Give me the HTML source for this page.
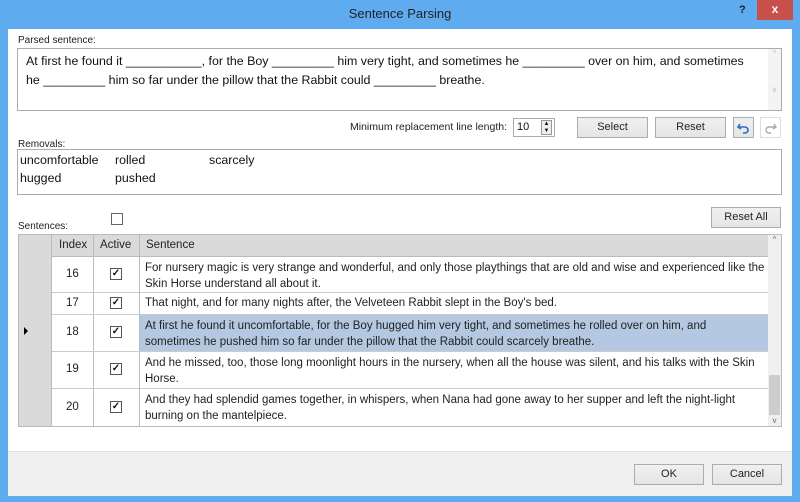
<!DOCTYPE html>
<html><head><style>
*{box-sizing:border-box;margin:0;padding:0}
body{width:800px;height:502px;background:#5eabf0;font-family:"Liberation Sans",sans-serif;position:relative;overflow:hidden;color:#111}
.a{position:absolute}
.win{left:8px;top:29px;width:784px;height:467px;background:#fff}
.lbl{font-size:10px;color:#222}
.box{border:1px solid #ababab;background:#fff}
.btn{border:1px solid #acacac;background:linear-gradient(#f0f0f0,#e5e5e5);font-size:11px;text-align:center;color:#222}
.t13{font-size:12.4px;color:#111}
.g{font-size:11.5px;color:#222;white-space:nowrap}
.cb{width:12px;height:12px;border:1px solid #555;background:#fff;font-size:10px;line-height:10px;text-align:center;font-weight:bold}
</style></head><body>
<div class="a" style="left:0;top:0;width:800px;height:29px;text-align:center;font-size:13px;line-height:27px;color:#222">Sentence Parsing</div>
<div class="a" style="left:739px;top:4px;font-size:11px;font-weight:bold;color:#222">?</div>
<div class="a" style="left:757px;top:0;width:36px;height:20px;background:#c7504a;color:#fff;text-align:center;font-size:12px;line-height:19px;font-weight:bold">x</div>
<div class="a win"></div>
<div class="a lbl" style="left:18px;top:35px">Parsed sentence:</div>
<div class="a box" style="left:17px;top:48px;width:765px;height:63px"></div>
<div class="a" style="left:768px;top:49px;width:13px;height:61px;background:#f4f4f4;color:#bbb;font-size:8px;text-align:center">^<br><br><br><br>v</div>
<div class="a t13" style="left:26px;top:52px;line-height:19px;white-space:nowrap">At first he found it ___________, for the Boy _________ him very tight, and sometimes he _________ over on him, and sometimes<br>he _________ him so far under the pillow that the Rabbit could _________ breathe.</div>
<div class="a g" style="left:300px;top:121px;width:207px;text-align:right;font-size:10.5px">Minimum replacement line length:</div>
<div class="a box" style="left:513px;top:118px;width:42px;height:19px;font-size:11px;padding:2px 3px">10</div>
<div class="a" style="left:541px;top:120px;width:11px;height:15px;border:1px solid #999;background:#eee;font-size:6px;line-height:7px;text-align:center">▲<br>▼</div>
<div class="a btn" style="left:577px;top:117px;width:71px;height:21px;line-height:19px">Select</div>
<div class="a btn" style="left:655px;top:117px;width:71px;height:21px;line-height:19px">Reset</div>
<div class="a btn" style="left:733px;top:117px;width:21px;height:21px"><svg width="19" height="19"><path d="M6 6 L4 9 L7 11 M4 9 H11 A3 3 0 0 1 11 15 H9" fill="none" stroke="#2a6cc4" stroke-width="1.6"/></svg></div>
<div class="a" style="left:760px;top:117px;width:21px;height:21px;border:1px solid #ddd"><svg width="19" height="19"><path d="M13 6 L15 9 L12 11 M15 9 H8 A3 3 0 0 0 8 15 H10" fill="none" stroke="#aaa" stroke-width="1.4"/></svg></div>
<div class="a lbl" style="left:18px;top:139px">Removals:</div>
<div class="a box" style="left:17px;top:149px;width:765px;height:46px"></div>
<div class="a t13" style="left:20px;top:153px">uncomfortable</div>
<div class="a t13" style="left:20px;top:171px">hugged</div>
<div class="a t13" style="left:115px;top:153px">rolled</div>
<div class="a t13" style="left:115px;top:171px">pushed</div>
<div class="a t13" style="left:209px;top:153px">scarcely</div>
<div class="a lbl" style="left:18px;top:221px">Sentences:</div>
<div class="a" style="left:111px;top:213px;width:12px;height:12px;border:1px solid #666;background:#fff"></div>
<div class="a btn" style="left:711px;top:207px;width:70px;height:21px;line-height:19px">Reset All</div>
<div class="a" style="left:18px;top:234px;width:764px;height:193px;border:1px solid #bbb;background:#fff"></div>
<div class="a" style="left:19px;top:235px;width:749px;height:21px;background:#dadada"></div>
<div class="a" style="left:19px;top:235px;width:33px;height:191px;background:#dadada;border-right:1px solid #bbb"></div>
<div class="a" style="left:768px;top:235px;width:13px;height:191px;background:#f0f0f0;color:#666;font-size:8px;text-align:center">^</div>
<div class="a" style="left:769px;top:375px;width:11px;height:40px;background:#cdcdcd"></div>
<div class="a" style="left:768px;top:416px;width:13px;font-size:8px;color:#666;text-align:center">v</div>
<div class="a g" style="left:59px;top:239px">Index</div>
<div class="a g" style="left:100px;top:239px">Active</div>
<div class="a g" style="left:146px;top:239px">Sentence</div>
<div class="a" style="left:139px;top:314px;width:629px;height:37px;background:#b4c8e2"></div>
<div class="a" style="left:51px;top:235px;width:1px;height:191px;background:#bbb"></div>
<div class="a" style="left:93px;top:235px;width:1px;height:191px;background:#bbb"></div>
<div class="a" style="left:139px;top:235px;width:1px;height:191px;background:#bbb"></div>
<div class="a" style="left:52px;top:256px;width:716px;height:1px;background:#bbb"></div>
<div class="a" style="left:52px;top:292px;width:716px;height:1px;background:#ccc"></div>
<div class="a" style="left:52px;top:314px;width:716px;height:1px;background:#ccc"></div>
<div class="a" style="left:52px;top:351px;width:716px;height:1px;background:#ccc"></div>
<div class="a" style="left:52px;top:388px;width:716px;height:1px;background:#ccc"></div>
<div class="a" style="left:24px;top:327px;width:0;height:0;border-left:4px solid #000;border-top:4px solid transparent;border-bottom:4px solid transparent"></div>
<div class="a g" style="left:66px;top:268px">16</div>
<div class="a g" style="left:66px;top:297px">17</div>
<div class="a g" style="left:66px;top:326px">18</div>
<div class="a g" style="left:66px;top:363px">19</div>
<div class="a g" style="left:66px;top:401px">20</div>
<div class="a cb" style="left:110px;top:268px">✓</div>
<div class="a cb" style="left:110px;top:297px">✓</div>
<div class="a cb" style="left:110px;top:326px">✓</div>
<div class="a cb" style="left:110px;top:363px">✓</div>
<div class="a cb" style="left:110px;top:401px">✓</div>
<div class="a g" style="left:145px;top:260px;line-height:16px">For nursery magic is very strange and wonderful, and only those playthings that are old and wise and experienced like the<br>Skin Horse understand all about it.</div>
<div class="a g" style="left:145px;top:297px">That night, and for many nights after, the Velveteen Rabbit slept in the Boy's bed.</div>
<div class="a g" style="left:145px;top:318px;line-height:16px">At first he found it uncomfortable, for the Boy hugged him very tight, and sometimes he rolled over on him, and<br>sometimes he pushed him so far under the pillow that the Rabbit could scarcely breathe.</div>
<div class="a g" style="left:145px;top:355px;line-height:16px">And he missed, too, those long moonlight hours in the nursery, when all the house was silent, and his talks with the Skin<br>Horse.</div>
<div class="a g" style="left:145px;top:392px;line-height:16px">And they had splendid games together, in whispers, when Nana had gone away to her supper and left the night-light<br>burning on the mantelpiece.</div>
<div class="a" style="left:8px;top:451px;width:784px;height:45px;background:#f0f0f0;border-top:1px solid #e0e0e0"></div>
<div class="a btn" style="left:634px;top:464px;width:70px;height:21px;line-height:19px">OK</div>
<div class="a btn" style="left:712px;top:464px;width:70px;height:21px;line-height:19px">Cancel</div>
</body></html>
